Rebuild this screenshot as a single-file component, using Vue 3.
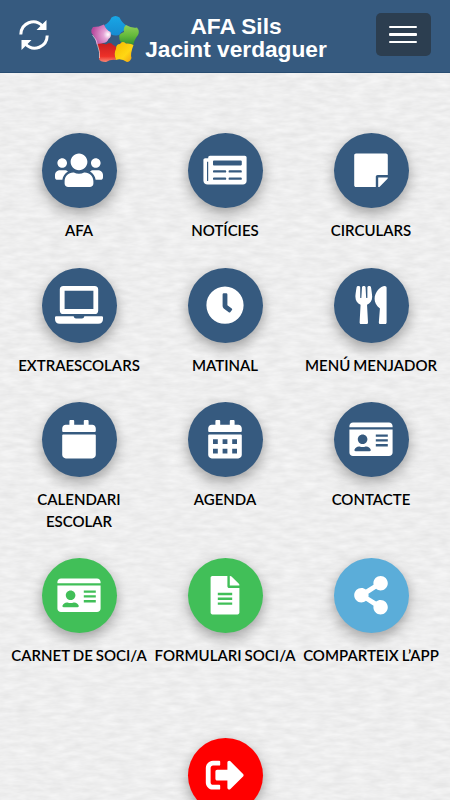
<template>
  <div class="app">
    <!-- paper texture -->
    <svg class="paper" width="450" height="727" aria-hidden="true">
      <filter id="grain" x="0" y="0" width="100%" height="100%" color-interpolation-filters="sRGB">
        <feTurbulence type="fractalNoise" baseFrequency="0.06 0.2" numOctaves="3" seed="8" />
        <feColorMatrix values="0.08 0 0 0 0.893  0.08 0 0 0 0.893  0.08 0 0 0 0.894  0 0 0 0 1" />
      </filter>
      <rect width="450" height="727" filter="url(#grain)" />
    </svg>

    <header class="topbar">
      <button class="refresh" aria-label="Actualitza">
        <svg viewBox="0 0 30 30" width="30" height="30">
          <g fill="none" stroke="#fff" stroke-width="3">
            <path d="M1.800 14.500C2 3 15.500-2.500 23.500 6" />
            <path d="M28.200 15.500C28 27 14.500 32.500 6.500 24" />
          </g>
          <path d="M27.500 0v10H17.500zM2.500 30V20h10z" fill="#fff" />
        </svg>
      </button>

      <div class="brand">
        <svg class="logo" viewBox="0 0 48 48" width="48" height="48">
          <defs>
            <linearGradient id="gBlue" x1="0" y1="0" x2="0" y2="1">
              <stop offset="0" stop-color="#18a7e6" /><stop offset="1" stop-color="#168bd0" />
            </linearGradient>
            <radialGradient id="gPink" cx="0.85" cy="0.5" r="0.8">
              <stop offset="0" stop-color="#fff" /><stop offset="0.3" stop-color="#e5a3d6" /><stop offset="1" stop-color="#b84a9d" />
            </radialGradient>
            <linearGradient id="gGreen" x1="0" y1="0" x2="0" y2="1">
              <stop offset="0" stop-color="#91d05a" /><stop offset="0.55" stop-color="#64ba3b" /><stop offset="1" stop-color="#349232" />
            </linearGradient>
            <linearGradient id="gRed" x1="0" y1="0" x2="0" y2="1">
              <stop offset="0" stop-color="#c91e20" /><stop offset="0.7" stop-color="#ed3028" /><stop offset="1" stop-color="#fa8876" />
            </linearGradient>
            <linearGradient id="gYellow" x1="0" y1="0" x2="1" y2="1">
              <stop offset="0" stop-color="#f6b800" /><stop offset="0.6" stop-color="#ffd713" /><stop offset="1" stop-color="#f19b13" />
            </linearGradient>
          </defs>
          <path d="M13.500 10Q18 8 20.500 2.500Q24.500-0.500 28.500 2.500Q31 8 35.500 10.500Q35 15 30 17.500Q29 21 24.500 20.500Q19 20.500 19.500 17Q14 15 13.500 10z" fill="url(#gBlue)" />
          <path d="M2 12Q8 12 13 9.500Q15 15 19.500 17Q21 22 17.500 24Q16 28 12 28Q9 30 5.500 29.500Q5 23 0.500 18Q0 14 2 12z" fill="url(#gPink)" />
          <path d="M35 10Q41 13.500 46 12.500Q49 16 47 20Q43 25 42.500 29.500Q36 28 32 27.500Q28 27 28.500 23Q27 19 33 17Q32 12 35 10z" fill="url(#gGreen)" />
          <path d="M6 29Q12 28 15 29.500Q20 26.500 22 30Q26 31 25 35Q22.500 38 25 45Q20 44 15 47Q9 47 8 44Q9 35 6 29z" fill="url(#gRed)" />
          <path d="M25 45Q22.500 38 25 34Q25 29 29 29Q31 25.500 35 28.500Q40 28 42.500 30Q39 39 40.500 43Q39 47 36 47Q30 43 25 45z" fill="url(#gYellow)" />
          <path d="M1.500 20Q6 25 6.500 30Q9.500 38 8.500 43" fill="none" stroke="#fff" stroke-width="0.8" opacity=".7" />
        </svg>
        <h1 class="title">AFA Sils<br />Jacint verdaguer</h1>
      </div>

      <button class="menu" aria-label="Menú">
        <span></span><span></span><span></span>
      </button>
    </header>

    <main class="grid">
      <a v-for="item in items" :key="item.label" class="item">
        <span class="circle" :class="item.tone">
          <svg class="icon" :viewBox="`0 0 ${icons[item.icon].w} 512`">
            <path :d="icons[item.icon].d" fill-rule="evenodd" />
          </svg>
        </span>
        <span class="label">{{ item.label }}</span>
      </a>
      <a class="item exit">
        <span class="circle red">
          <svg class="icon" viewBox="0 0 512 512">
            <path :d="icons.exit.d" />
          </svg>
        </span>
      </a>
    </main>
  </div>
</template>

<script setup>
const items = [
  { label: 'AFA', icon: 'users' },
  { label: 'NOTÍCIES', icon: 'news' },
  { label: 'CIRCULARS', icon: 'note' },
  { label: 'EXTRAESCOLARS', icon: 'laptop' },
  { label: 'MATINAL', icon: 'clock' },
  { label: 'MENÚ MENJADOR', icon: 'food' },
  { label: 'CALENDARI ESCOLAR', icon: 'calendar' },
  { label: 'AGENDA', icon: 'agenda' },
  { label: 'CONTACTE', icon: 'card' },
  { label: 'CARNET DE SOCI/A', icon: 'card', tone: 'green' },
  { label: 'FORMULARI SOCI/A', icon: 'file', tone: 'green' },
  { label: 'COMPARTEIX L’APP', icon: 'share', tone: 'sky' }
]

const calendar = 'M12 192h424c6.600 0 12 5.400 12 12v260c0 26.500-21.500 48-48 48H48c-26.500 0-48-21.500-48-48V204c0-6.600 5.400-12 12-12zm436-44v-36c0-26.500-21.500-48-48-48h-48V12c0-6.600-5.400-12-12-12h-40c-6.600 0-12 5.400-12 12v52H160V12c0-6.600-5.400-12-12-12h-40c-6.600 0-12 5.400-12 12v52H48C21.500 64 0 85.500 0 112v36c0 6.600 5.400 12 12 12h424c6.600 0 12-5.400 12-12z'

const icons = {
  users: {
    w: 640,
    d: 'M96 224c35.300 0 64-28.700 64-64s-28.700-64-64-64-64 28.700-64 64 28.700 64 64 64zm448 0c35.300 0 64-28.700 64-64s-28.700-64-64-64-64 28.700-64 64 28.700 64 64 64zm32 32h-64c-17.600 0-33.500 7.100-45.100 18.600 40.300 22.100 68.900 62 75.100 109.400h66c17.700 0 32-14.300 32-32v-32c0-35.300-28.700-64-64-64zm-256 0c61.900 0 112-50.100 112-112S381.900 32 320 32 208 82.100 208 144s50.100 112 112 112zm76.800 32h-8.300c-20.800 10-43.900 16-68.500 16s-47.600-6-68.500-16h-8.300C179.600 288 128 339.600 128 403.200V432c0 26.500 21.500 48 48 48h288c26.500 0 48-21.500 48-48v-28.800c0-63.600-51.600-115.200-115.200-115.200zm-223.700-13.400C161.500 263.100 145.600 256 128 256H64c-35.300 0-64 28.700-64 64v32c0 17.700 14.300 32 32 32h65.900c6.300-47.400 34.900-87.300 75.200-109.400z'
  },
  news: {
    w: 576,
    d: 'M552 64H88c-13.255 0-24 10.745-24 24v8H24c-13.255 0-24 10.745-24 24v272c0 30.928 25.072 56 56 56h472c26.510 0 48-21.490 48-48V88c0-13.255-10.745-24-24-24zM56 400a8 8 0 0 1-8-8V144h16v248a8 8 0 0 1-8 8zm236-16H140c-6.627 0-12-5.373-12-12v-8c0-6.627 5.373-12 12-12h152c6.627 0 12 5.373 12 12v8c0 6.627-5.373 12-12 12zm208 0H348c-6.627 0-12-5.373-12-12v-8c0-6.627 5.373-12 12-12h152c6.627 0 12 5.373 12 12v8c0 6.627-5.373 12-12 12zm-208-96H140c-6.627 0-12-5.373-12-12v-8c0-6.627 5.373-12 12-12h152c6.627 0 12 5.373 12 12v8c0 6.627-5.373 12-12 12zm208 0H348c-6.627 0-12-5.373-12-12v-8c0-6.627 5.373-12 12-12h152c6.627 0 12 5.373 12 12v8c0 6.627-5.373 12-12 12zm0-96H140c-6.627 0-12-5.373-12-12v-40c0-6.627 5.373-12 12-12h360c6.627 0 12 5.373 12 12v40c0 6.627-5.373 12-12 12z'
  },
  note: {
    w: 448,
    d: 'M312 320h136V56c0-13.300-10.700-24-24-24H24C10.700 32 0 42.700 0 56v400c0 13.300 10.700 24 24 24h264V344c0-13.200 10.800-24 24-24zm129 55l-98 98c-4.500 4.500-10.600 7-17 7h-6V352h128v6.100c0 6.300-2.500 12.400-7 16.900z'
  },
  laptop: {
    w: 640,
    d: 'M112 0H528Q576 0 576 48V326Q576 374 528 374H112Q64 374 64 326V48Q64 0 112 0zM128 64V308H512V64zM16 402H248Q256 434 280 434H360Q384 434 392 402H624Q640 402 640 418V440Q640 504 576 504H64Q0 504 0 440V418Q0 402 16 402z'
  },
  clock: {
    w: 512,
    d: 'M256 8C119 8 8 119 8 256S119 504 256 504 504 393 504 256 393 8 256 8Zm92.490 313l-20 25a16 16 0 0 1-22.490 2.500l-67-49.720a40 40 0 0 1-15-31.230V112a16 16 0 0 1 16-16h32a16 16 0 0 1 16 16V256l58 42.500A16 16 0 0 1 348.490 321Z'
  },
  food: {
    w: 416,
    d: 'M207.900 15.200c.8 4.700 16.100 94.500 16.100 128.800 0 52.300-27.800 89.600-68.900 104.600L168 486.700c.7 13.700-10.200 25.300-24 25.300H80c-13.700 0-24.700-11.500-24-25.300l12.900-238.100C27.700 233.600 0 196.200 0 144 0 109.600 15.300 19.900 16.100 15.200 19.300-5.100 61.400-5.400 64 16.300v141.200c1.300 3.400 15.100 3.200 16 0 1.400-25.300 7.900-139.200 8-141.800 3.300-20.800 44.700-20.800 47.900 0 .2 2.700 6.600 116.500 8 141.800.9 3.200 14.800 3.400 16 0V16.300c2.600-21.600 44.800-21.400 48-1.100zm119.200 285.700l-15 185.100c-1.200 14 9.900 26 23.900 26h56c13.300 0 24-10.700 24-24V24c0-13.200-10.700-24-24-24-82.500 0-221.400 178.500-64.900 300.900z'
  },
  calendar: { w: 448, d: calendar },
  // the same calendar with six day squares cut out
  agenda: {
    w: 448,
    d: calendar + 'M64 256h64v64h-64zM192 256h64v64h-64zM320 256h64v64h-64zM64 384h64v64h-64zM192 384h64v64h-64zM320 384h64v64h-64z'
  },
  card: {
    w: 576,
    d: 'M528 32H48C21.500 32 0 53.500 0 80v16h576V80c0-26.500-21.500-48-48-48zM0 432c0 26.500 21.500 48 48 48h480c26.500 0 48-21.500 48-48V128H0v304zM352 192h160v32h-160zM352 256h160v32h-160zM352 320h160v32h-160zM176 192c35.300 0 64 28.700 64 64s-28.700 64-64 64-64-28.700-64-64 28.700-64 64-64zM67.100 396.200C75.500 370.500 99.600 352 128 352h8.200c12.300 5.100 25.700 8 39.800 8s27.600-2.900 39.800-8h8.200c28.400 0 52.500 18.500 60.900 44.200 3.200 9.900-5.200 19.800-15.600 19.800H82.700c-10.400 0-18.800-10-15.600-19.800z'
  },
  file: {
    w: 384,
    d: 'M224 136V0H24C10.700 0 0 10.700 0 24v464c0 13.300 10.700 24 24 24h336c13.300 0 24-10.700 24-24V160H248c-13.200 0-24-10.800-24-24zM96 224h192v32h-192zM96 288h192v32h-192zM96 352h192v32h-192zM384 121.900v6.100H256V0h6.100c6.400 0 12.500 2.500 17 7l97.900 98c4.500 4.500 7 10.600 7 16.900z'
  },
  share: {
    w: 448,
    d: 'M352 320c-22.608 0-43.387 7.819-59.790 20.895l-102.486-64.054a96.551 96.551 0 0 0 0-41.683l102.486-64.054C308.613 184.181 329.392 192 352 192c53.019 0 96-42.981 96-96S405.019 0 352 0s-96 42.981-96 96c0 7.158.79 14.130 2.276 20.841L155.790 180.895C139.387 167.819 118.608 160 96 160c-53.019 0-96 42.981-96 96s42.981 96 96 96c22.608 0 43.387-7.819 59.790-20.895l102.486 64.054A96.301 96.301 0 0 0 256 416c0 53.019 42.981 96 96 96s96-42.981 96-96-42.981-96-96-96z'
  },
  exit: {
    w: 512,
    d: 'M497 273L329 441c-15 15-41 4.500-41-17v-96H152c-13.300 0-24-10.700-24-24v-96c0-13.300 10.700-24 24-24h136V88c0-21.400 25.900-32 41-17l168 168c9.300 9.400 9.300 24.600 0 34zM192 436v-40c0-6.600-5.400-12-12-12H96c-17.700 0-32-14.300-32-32V160c0-17.700 14.300-32 32-32h84c6.600 0 12-5.400 12-12V76c0-6.600-5.400-12-12-12H96c-53 0-96 43-96 96v192c0 53 43 96 96 96h84c6.600 0 12-5.400 12-12z'
  }
}
</script>

<style>
body {
  margin: 0;
  overflow: hidden;
}
</style>

<style scoped>
.app {
  position: relative;
  width: 450px;
  height: 800px;
  overflow: hidden;
  background: #eee;
}

.paper {
  position: absolute;
  left: 0;
  top: 73px;
}

.topbar {
  position: relative;
  box-sizing: border-box;
  height: 73px;
  padding: 0 19px;
  display: flex;
  align-items: flex-start;
  justify-content: space-between;
  background: #365a7f;
  border-bottom: 1px solid #284d72;
}

.refresh {
  margin-top: 20px;
  padding: 0;
  border: 0;
  background: none;
  line-height: 0;
}

.brand {
  display: flex;
  margin: 15px 0 0 -7px;
  gap: 6px;
}

.title {
  margin: 0;
  font-family: "Liberation Sans", Arial, sans-serif;
  font-size: 22.7px;
  line-height: 23px;
  font-weight: 700;
  text-align: center;
  white-space: nowrap;
  color: #fff;
}

.menu {
  box-sizing: border-box;
  width: 55px;
  height: 43px;
  margin-top: 13px;
  padding: 0;
  border: 0;
  border-radius: 5px;
  background: #2c3e50;
  display: flex;
  flex-direction: column;
  align-items: center;
  justify-content: center;
  gap: 5px;
}

.menu span {
  width: 28px;
  height: 2.5px;
  border-radius: 1px;
  background: #fff;
}

.grid {
  position: relative;
  display: grid;
  grid-template-columns: repeat(3, 146px);
  justify-content: center;
  row-gap: 26px;
  padding-top: 60px;
}

.item {
  display: flex;
  flex-direction: column;
  align-items: center;
  gap: 12px;
}

.circle {
  width: 75px;
  height: 75px;
  border-radius: 50%;
  background: #365a7f;
  box-shadow: 0 5px 14px rgba(0, 0, 0, 0.34);
  display: flex;
  align-items: center;
  justify-content: center;
}

.circle.green {
  background: #41bf58;
}

.circle.sky {
  background: #5badd9;
}

.circle.red {
  background: #f00;
}

.icon {
  width: 48px;
  height: 38.4px;
  fill: #fff;
}

.label {
  max-width: 144px;
  font-family: Lato, sans-serif;
  font-size: 15px;
  font-weight: 600;
  line-height: 21.5px;
  word-spacing: -0.7px;
  text-align: center;
  color: #000;
}

.exit {
  grid-column: 2;
  margin-top: 45.5px;
}
</style>
